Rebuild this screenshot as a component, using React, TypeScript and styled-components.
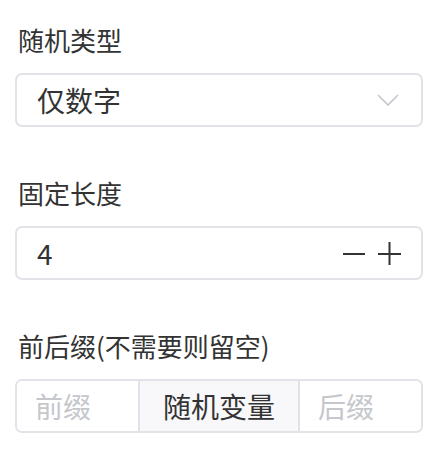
import React, { useState } from 'react'
import styled, { createGlobalStyle } from 'styled-components'

const GlobalStyle = createGlobalStyle`
  html, body {
    margin: 0;
    padding: 0;
    background: #fff;
  }
  body {
    font-family: "Noto Sans CJK SC", "Noto Sans", sans-serif;
    color: #333;
  }
`

const Form = styled.div`
  width: 408px;
  padding: 22px 0 0 15px;
`

const FormItem = styled.div`
  margin-bottom: 48px;
`

const Label = styled.div`
  font-size: 26px;
  line-height: 36px;
  padding-left: 3px;
  margin-bottom: 15px;
  color: #333;
`

const Box = styled.div`
  display: flex;
  align-items: center;
  height: 54px;
  box-sizing: border-box;
  border: 2px solid #e2e3e8;
  border-radius: 7px;
  background: #fff;
  overflow: hidden;
`

const Value = styled.div`
  flex: 1;
  font-size: 28px;
  line-height: 1;
  padding-left: 20px;
  color: #333;
`

const Arrow = styled.svg`
  margin-right: 22px;
`

const Stepper = styled.div`
  display: flex;
  align-items: center;
  gap: 12px;
  margin-right: 20px;
`

const StepButton = styled.button`
  border: none;
  background: none;
  padding: 0;
  display: flex;
  cursor: pointer;
`

const Cell = styled.div<{ $addon?: boolean; $muted?: boolean }>`
  flex: ${p => (p.$addon ? '0 0 auto' : '1')};
  height: 100%;
  display: flex;
  align-items: center;
  font-size: 28px;
  padding: ${p => (p.$addon ? '0 23px' : '0 18px')};
  background: ${p => (p.$addon ? '#f8f8fa' : '#fff')};
  border-left: ${p => (p.$addon ? '2px solid #e2e3e8' : 'none')};
  border-right: ${p => (p.$addon ? '2px solid #e2e3e8' : 'none')};
  color: ${p => (p.$muted ? '#c5c7cc' : '#333')};
`

export default function App() {
  const [len, setLen] = useState(4)
  return (
    <>
      <GlobalStyle />
      <Form>
        <FormItem>
          <Label>随机类型</Label>
          <Box>
            <Value>仅数字</Value>
            <Arrow width="22" height="12" viewBox="0 0 22 12">
              <path d="M1 1 L11 11 L21 1" fill="none" stroke="#c3c5cb" strokeWidth="1.6" />
            </Arrow>
          </Box>
        </FormItem>
        <FormItem>
          <Label>固定长度</Label>
          <Box>
            <Value>{len}</Value>
            <Stepper>
              <StepButton onClick={() => setLen(len - 1)}>
                <svg width="23" height="23" viewBox="0 0 23 23">
                  <path d="M0 12 H22" stroke="#333" strokeWidth="2" />
                </svg>
              </StepButton>
              <StepButton onClick={() => setLen(len + 1)}>
                <svg width="23" height="23" viewBox="0 0 23 23">
                  <path d="M0 12 H23 M11.5 0 V24" stroke="#333" strokeWidth="2" />
                </svg>
              </StepButton>
            </Stepper>
          </Box>
        </FormItem>
        <FormItem>
          <Label>前后缀(不需要则留空)</Label>
          <Box>
            <Cell $muted>前缀</Cell>
            <Cell $addon>随机变量</Cell>
            <Cell $muted>后缀</Cell>
          </Box>
        </FormItem>
      </Form>
    </>
  )
}
